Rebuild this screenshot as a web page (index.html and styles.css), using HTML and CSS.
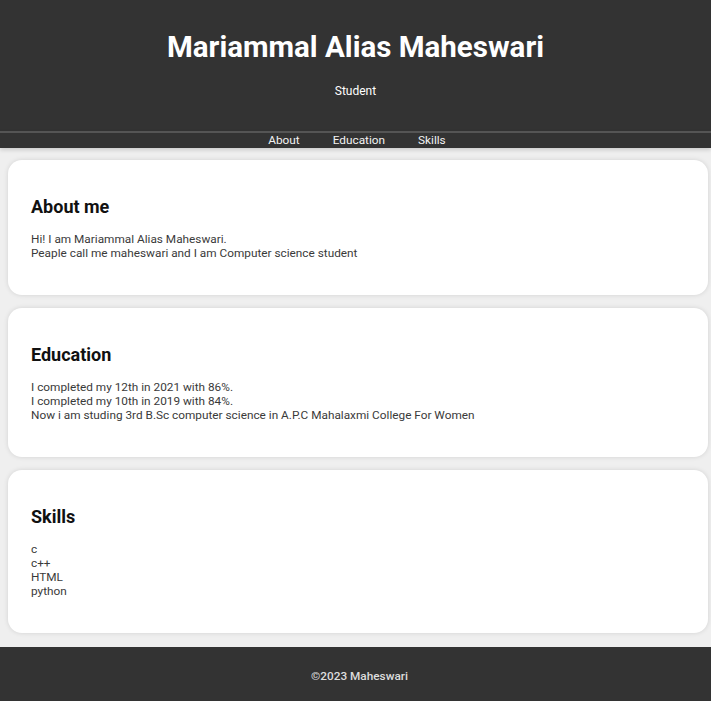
FILE: index.html
```
<!DOCTYPE html>
<html>
<head>
<meta charset="utf-8">
<title>Mariammal Alias Maheswari</title>
<link rel="stylesheet" href="styles.css">
</head>
<body>
<header class="site-header">
  <h1 class="title">Mariammal Alias Maheswari</h1>
  <p class="subtitle">Student</p>
</header>
<nav class="nav">
  <a href="#about">About</a>
  <a href="#education">Education</a>
  <a href="#skills">Skills</a>
</nav>
<main class="content">
  <section class="card" id="about">
    <h2>About me</h2>
    <p>Hi! I am Mariammal Alias Maheswari.<br>Peaple call me maheswari and I am Computer science student</p>
  </section>
  <section class="card" id="education">
    <h2>Education</h2>
    <p>I completed my 12th in 2021 with 86%.<br>I completed my 10th in 2019 with 84%.<br>Now i am studing 3rd B.Sc computer science in A.P.C Mahalaxmi College For Women</p>
  </section>
  <section class="card" id="skills">
    <h2>Skills</h2>
    <p>c<br>c++<br>HTML<br>python</p>
  </section>
</main>
<footer class="site-footer">©2023 Maheswari</footer>
</body>
</html>
```
FILE: styles.css
```
* { box-sizing: border-box; }
html, body { margin: 0; padding: 0; }
body {
  font-family: Roboto, "Liberation Sans", sans-serif;
  background: #efefef;
  color: #333;
}
.site-header {
  background: #333;
  color: #fff;
  text-align: center;
  height: 131px;
  padding-top: 30px;
}
.title {
  margin: 0;
  font-size: 29.5px;
  line-height: 34px;
  font-weight: 700;
}
.subtitle {
  margin: 20px 0 0;
  font-size: 12px;
  line-height: 14px;
}
.nav {
  background: #333;
  border-top: 2px solid #555;
  height: 17px;
  display: flex;
  justify-content: center;
  align-items: center;
  gap: 33px;
  padding-left: 3px;
  box-shadow: 0 2px 4px rgba(0,0,0,0.15);
  position: relative;
}
.nav a {
  color: #f2f2f2;
  text-decoration: none;
  font-size: 11.8px;
  line-height: 15px;
}
.content {
  padding: 12px 3px 14px 8px;
  display: flex;
  flex-direction: column;
  gap: 13px;
}
.card {
  background: #fff;
  border-radius: 14px;
  padding: 20px 23px;
  box-shadow: 0 0 5px rgba(0,0,0,0.12);
}
.card h2 {
  margin: 16px 0 15px;
  font-size: 18px;
  line-height: 21px;
  color: #111;
  font-weight: 700;
}
.card p {
  margin: 0 0 15px;
  font-size: 11.8px;
  line-height: 14px;
  color: #3a3a3a;
}
.site-footer {
  background: #333;
  color: #ddd;
  text-align: center;
  height: 54px;
  font-size: 11.8px;
  font-weight: 500;
  line-height: 14px;
  padding: 22px 0 0 8px;
}
```
